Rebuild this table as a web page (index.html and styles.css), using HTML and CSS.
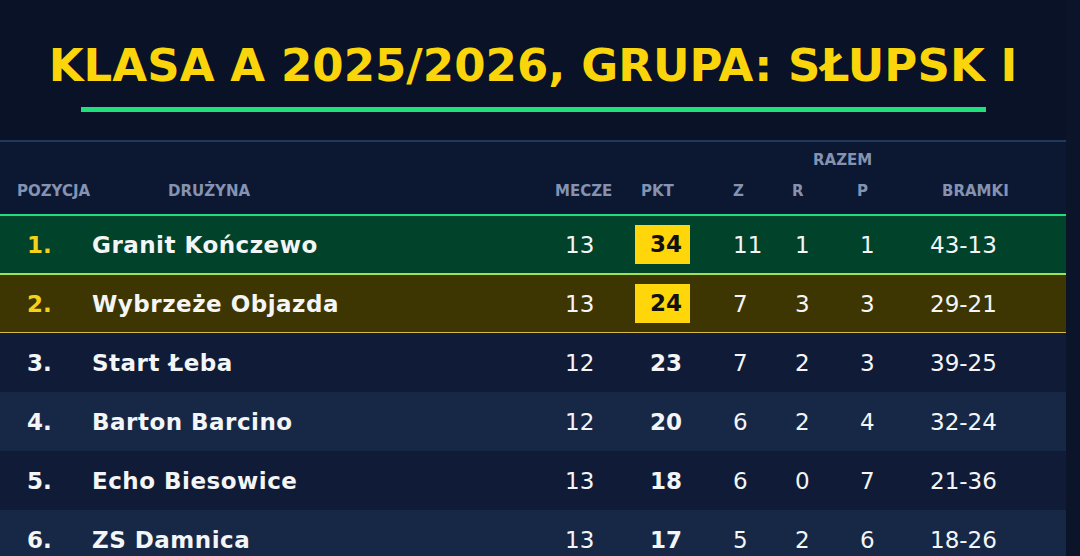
FILE: index.html
```html
<!DOCTYPE html>
<html lang="pl">
<head>
<meta charset="utf-8">
<title>Klasa A 2025/2026, Grupa: Słupsk I</title>
<link rel="stylesheet" href="styles.css">
</head>
<body>
<div class="board">
  <header class="hero">
    <h1 class="title">KLASA A 2025/2026, GRUPA: SŁUPSK I</h1>
    <div class="bar"></div>
  </header>
  <section class="table">
    <div class="thead">
      <div class="group-row"><span class="razem">RAZEM</span></div>
      <div class="grid labels">
        <span class="h h-pos">POZYCJA</span>
        <span class="h h-name">DRUŻYNA</span>
        <span class="h h-m">MECZE</span>
        <span class="h h-pkt">PKT</span>
        <span class="h h-z">Z</span>
        <span class="h h-r">R</span>
        <span class="h h-p">P</span>
        <span class="h h-b">BRAMKI</span>
      </div>
    </div>
    <div class="grid row first">
      <span class="pos">1.</span><span class="name">Granit Kończewo</span><span class="num">13</span><span class="pkt"><b class="box">34</b></span><span class="num">11</span><span class="num">1</span><span class="num">1</span><span class="num">43-13</span>
    </div>
    <div class="grid row second">
      <span class="pos">2.</span><span class="name">Wybrzeże Objazda</span><span class="num">13</span><span class="pkt"><b class="box">24</b></span><span class="num">7</span><span class="num">3</span><span class="num">3</span><span class="num">29-21</span>
    </div>
    <div class="grid row odd">
      <span class="pos">3.</span><span class="name">Start Łeba</span><span class="num">12</span><span class="pkt"><b class="plain">23</b></span><span class="num">7</span><span class="num">2</span><span class="num">3</span><span class="num">39-25</span>
    </div>
    <div class="grid row even">
      <span class="pos">4.</span><span class="name">Barton Barcino</span><span class="num">12</span><span class="pkt"><b class="plain">20</b></span><span class="num">6</span><span class="num">2</span><span class="num">4</span><span class="num">32-24</span>
    </div>
    <div class="grid row odd">
      <span class="pos">5.</span><span class="name">Echo Biesowice</span><span class="num">13</span><span class="pkt"><b class="plain">18</b></span><span class="num">6</span><span class="num">0</span><span class="num">7</span><span class="num">21-36</span>
    </div>
    <div class="grid row even">
      <span class="pos">6.</span><span class="name">ZS Damnica</span><span class="num">13</span><span class="pkt"><b class="plain">17</b></span><span class="num">5</span><span class="num">2</span><span class="num">6</span><span class="num">18-26</span>
    </div>
  </section>
</div>
</body>
</html>
```

FILE: styles.css
```css
* { box-sizing: border-box; }
html, body { margin: 0; padding: 0; }
body {
  background: #0c1429;
  font-family: "DejaVu Sans", "Noto Sans", sans-serif;
  overflow: hidden;
  height: 556px;
}
.board {
  width: 1066px;
  background: #0a1227;
}
.hero {
  padding-top: 40px;
  padding-bottom: 28px;
  display: flex;
  flex-direction: column;
  align-items: center;
}
.title {
  margin: 0;
  font-size: 45px;
  font-weight: bold;
  line-height: 52px;
  color: #fbd50b;
  white-space: nowrap;
  letter-spacing: 0.06px;
}
.bar {
  margin-top: 15px;
  width: 905px;
  height: 5px;
  background: #1fe07a;
}
.table {
  border-top: 2px solid #21395c;
}
.grid {
  display: grid;
  grid-template-columns: 92px 473px 70px 98px 62px 65px 70px 136px;
  align-items: center;
}
.thead {
  background: #0c1831;
  padding-top: 8px;
  padding-bottom: 14px;
  border-bottom: 2px solid #22dd7b;
}
.group-row {
  height: 18px;
  margin-bottom: 14px;
}
.razem {
  margin-left: 813px;
  font-size: 15px;
  line-height: 18px;
  font-weight: bold;
  color: #8593b2;
}
.labels { height: 18px; }
.h {
  font-size: 15px;
  line-height: 18px;
  font-weight: bold;
  color: #8593b2;
  white-space: nowrap;
}
.h-pos { margin-left: 17px; }
.h-name { margin-left: 76px; }
.h-m { margin-left: -10px; }
.h-pkt { margin-left: 6px; }
.h-z { margin-left: 0; }
.h-r { margin-left: -3px; }
.h-p { margin-left: -3px; }
.h-b { margin-left: 12px; }

.row {
  height: 59px;
  font-size: 23px;
  color: #f3f5f7;
}
.row.first { background: #00432a; border-bottom: 2px solid #a2e34c; }
.row.second { background: #3d3602; height: 58px; border-bottom: 1px solid #d7b94a; }
.row.odd { background: #101c37; }
.row.even { background: #172846; }
.pos {
  padding-left: 27px;
  font-weight: bold;
  color: #f3f5f7;
}
.first .pos, .second .pos { color: #f4d21c; }
.name { font-weight: bold; white-space: nowrap; letter-spacing: 0.5px; }
.num { white-space: nowrap; }
.pkt { display: flex; }
.box {
  background: #ffd60a;
  color: #111111;
  padding: 0 8px 0 15px;
  height: 39px;
  line-height: 39px;
}
.plain { padding-left: 15px; }
```
